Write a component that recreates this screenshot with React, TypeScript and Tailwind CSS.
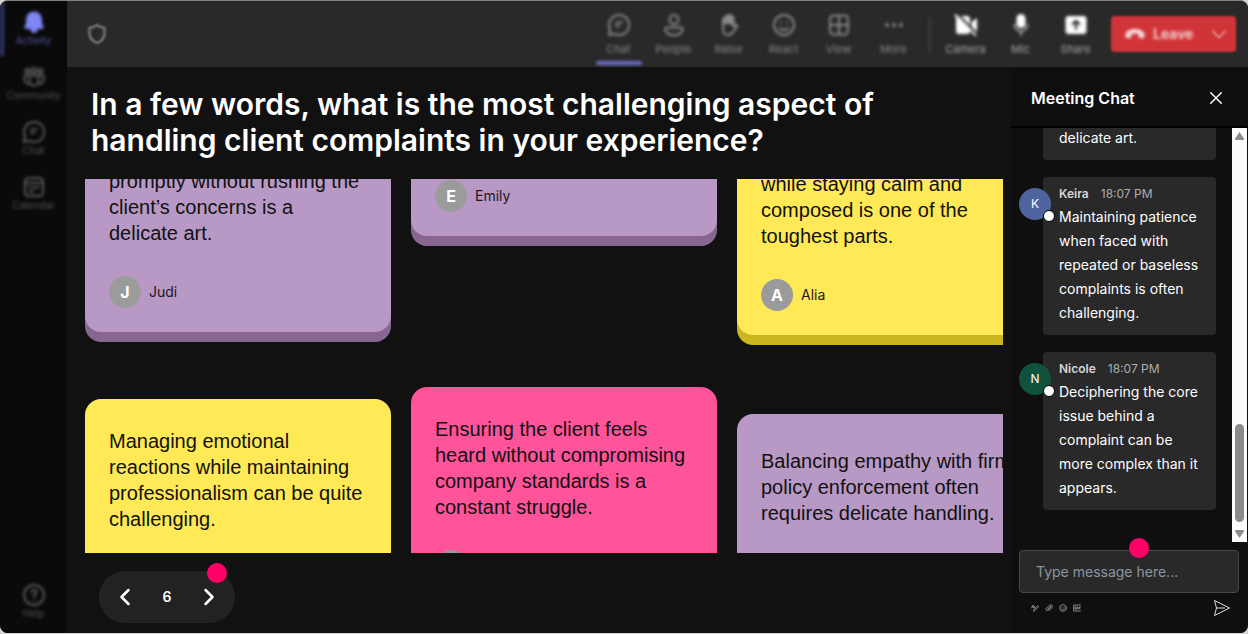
import type { ReactNode } from "react";

type IconProps = { children: ReactNode; className?: string };

function Icon({ children, className = "size-6" }: IconProps) {
  return (
    <svg
      viewBox="0 0 24 24"
      className={className}
      fill="none"
      stroke="currentColor"
      strokeWidth="2"
      strokeLinecap="round"
      strokeLinejoin="round"
      aria-hidden="true"
    >
      {children}
    </svg>
  );
}

const bell = (
  <path
    fill="currentColor"
    d="M12 2.5a7 7 0 0 0-7 7v4l-1.6 3.4c-.3.6.1 1.1.7 1.1h15.800c.6 0 1-.5.7-1.100L19 13.500v-4a7 7 0 0 0-7-7ZM9.500 19.500a2.500 2.500 0 0 0 5 0Z"
  />
);
const chat = (
  <>
    <path d="M12 2a10 10 0 1 1-4.600 18.800L1.800 22l1.300-5.400A10 10 0 0 1 12 2Z" />
    <path d="M9 9.500h6M9 13h3" />
  </>
);
const community = (
  <>
    <circle cx="5.500" cy="6" r="2" />
    <circle cx="12" cy="5.500" r="2.500" />
    <circle cx="18.500" cy="6" r="2" />
    <path d="M7.500 10.500h9V16a4.500 4.500 0 0 1-9 0ZM7 10.500H2.500V15a4 4 0 0 0 5 3.500M17 10.500h4.500V15a4 4 0 0 1-5 3.500" />
  </>
);
const calendar = (
  <>
    <rect x="3" y="3" width="18" height="18" rx="3.500" />
    <path d="M3 8h18M7.500 12.500h2M11.500 12.500h5M7.500 16.500h4" />
  </>
);
const help = (
  <>
    <circle cx="12" cy="12" r="10" />
    <path d="M9.500 9.500a2.500 2.500 0 1 1 3.800 2.100c-.8.600-1.300 1-1.300 2.100M12 16.800v.1" />
  </>
);
const people = (
  <>
    <circle cx="12" cy="6.500" r="4.500" />
    <path d="M5 14.500h14c1 0 1.800.8 1.800 1.800 0 3.700-4 6-8.800 6s-8.800-2.300-8.800-6c0-1 .8-1.800 1.800-1.800Z" />
  </>
);
const hand = (
  <>
    <path fill="currentColor" d="M6 12V6.500a1.300 1.300 0 0 1 2.600 0V4a1.300 1.300 0 0 1 2.600 0V3a1.300 1.300 0 0 1 2.600 0v1.500a1.300 1.300 0 0 1 2.600 0V12l-3-2H8Z" />
    <path d="M6 11v4.500c0 4 2 6.500 5 6.500 3.500 0 4.500-2 6-4.500l3.500-4.800c-1.300-1.200-2.700-.8-4.100.8V8" />
  </>
);
const smile = (
  <>
    <circle cx="12" cy="12" r="10" />
    <path d="M8.800 9.500v.3M15.200 9.500v.3M7.800 15c2.200 2.600 6.200 2.600 8.400 0" />
  </>
);
const grid = (
  <>
    <rect x="3" y="2.500" width="18" height="19" rx="3.500" />
    <path d="M12 3v18M3 12h18" />
  </>
);
const more = (
  <>
    <circle cx="5" cy="12" r="1" fill="currentColor" />
    <circle cx="12" cy="12" r="1" fill="currentColor" />
    <circle cx="19" cy="12" r="1" fill="currentColor" />
  </>
);
const camera = (
  <>
    <path fill="currentColor" stroke="none" d="M4 3h9a3 3 0 0 1 3 3v12a3 3 0 0 1-3 3H5a3 3 0 0 1-3-3V3ZM17.500 9 23 5v14l-5.500-4Z" />
    <path d="m1.500 2 20 20" />
    <path stroke="#292929" d="m4 1.500 19 19" />
  </>
);
const mic = (
  <>
    <rect x="8.500" y="2" width="7" height="12" rx="3.500" fill="currentColor" />
    <path className="text-[#a0a0a0]" d="M5.500 11.500a6.500 6.500 0 0 0 13 0M12 18v4" />
  </>
);
const share = (
  <>
    <rect x="2.500" y="4" width="19" height="16" rx="2" fill="currentColor" />
    <path stroke="#292929" d="M12 16V8M8.500 11.300 12 7.800l3.500 3.500" />
  </>
);

const navItems = [
  { label: "Activity", icon: bell, active: true },
  { label: "Community", icon: community, active: false },
  { label: "Chat", icon: chat, active: false },
  { label: "Calendar", icon: calendar, active: false },
];

const meetingTools = [
  { label: "Chat", icon: chat, active: true },
  { label: "People", icon: people, active: false },
  { label: "Raise", icon: hand, active: false },
  { label: "React", icon: smile, active: false },
  { label: "View", icon: grid, active: false },
  { label: "More", icon: more, active: false },
];

const deviceTools = [
  { label: "Camera", icon: camera },
  { label: "Mic", icon: mic },
  { label: "Share", icon: share },
];

function NavButton({ label, icon, active }: { label: string; icon: ReactNode; active: boolean }) {
  return (
    <button
      type="button"
      className={`flex h-[55px] w-full flex-col items-center border-l-4 pr-1 pt-[9px] text-[10px] leading-3 ${
        active ? "border-[#34356b] text-[#5557a5]" : "border-transparent text-[#555]"
      }`}
    >
      <span className={active ? "text-[#7f85f5]" : "text-[#5a5a5a]"}>
        <Icon>{icon}</Icon>
      </span>
      {label}
    </button>
  );
}

function Sidebar() {
  return (
    <nav className="flex w-[67px] shrink-0 flex-col bg-[#0a0a0a]">
      <div className="blur-[1px]">
        <div className="blur-[1px]">
          {navItems.map((item) => (
            <NavButton key={item.label} {...item} />
          ))}
        </div>
      </div>
      <div className="mb-1 mt-auto blur-[1px]">
        <div className="blur-[1px]">
          <NavButton label="Help" icon={help} active={false} />
        </div>
      </div>
    </nav>
  );
}

function TopBar() {
  return (
    <header className="flex h-[66px] shrink-0 items-stretch bg-[#292929] pl-[18px] pr-3 text-[11px] leading-3 text-[#8a8a8a] shadow-sm">
      <div className="mr-auto flex items-center blur-[1px]">
        <Icon>
          <path d="M12 3c2 1.700 4.500 2.500 7.500 2.700V11c0 5-2.800 8.200-7.500 10-4.700-1.800-7.500-5-7.500-10V5.700C7.500 5.500 10 4.700 12 3Z" />
        </Icon>
      </div>
      <div className="flex blur-[1px]">
        <div className="flex blur-[1px]">
          {meetingTools.map((t) => (
            <button key={t.label} type="button" className="flex w-[55px] flex-col items-center pt-3">
              <Icon>{t.icon}</Icon>
              <span className="mt-1.5">{t.label}</span>
              {t.active && <span className="mt-1.5 h-1 w-[46px] rounded-full bg-[#6a6dca]" />}
            </button>
          ))}
          <span className="mx-2 mt-4 h-9 w-px bg-[#555]" />
          {deviceTools.map((t) => (
            <button key={t.label} type="button" className="flex w-[55px] flex-col items-center pt-3">
              <span className="text-white">
                <Icon>{t.icon}</Icon>
              </span>
              <span className="mt-1.5 text-[#a8a8a8]">{t.label}</span>
            </button>
          ))}
        </div>
        <div className="ml-2 mt-[15px] flex h-9 w-[125px] items-center rounded bg-[#d13438] text-[#f8dcdd]">
          <button type="button" className="flex flex-1 items-center gap-2 pl-3.5 text-sm font-semibold blur-[1px]">
            <svg viewBox="0 0 20 10" className="h-2.5 w-5" fill="currentColor" aria-hidden="true">
              <path d="M10 0C5.500 0 1.500 1.800.6 4.800.2 6.300.5 8 1.300 9c.3.400.8.500 1.300.400l2.800-.7c.7-.2 1.100-.8 1.100-1.500l.1-2.200c2.200-.8 4.600-.8 6.800 0l.1 2.200c0 .7.400 1.300 1.100 1.500l2.800.7c.5.100 1 0 1.300-.4.800-1 1.100-2.700.7-4.200C18.500 1.800 14.500 0 10 0Z" />
            </svg>
            Leave
          </button>
          <button type="button" aria-label="Leave options" className="px-2 text-[#ee9a9c]">
            <Icon className="size-[18px]">
              <path d="m4 8.500 8 8 8-8" />
            </Icon>
          </button>
        </div>
      </div>
    </header>
  );
}

const palette = {
  purple: "bg-[#b899c5] shadow-[0_10px_0_#876791]",
  yellow: "bg-[#ffe957] shadow-[0_10px_0_#cbb521]",
  pink: "bg-[#ff5499] shadow-[0_10px_0_#c93a74]",
};

type NoteProps = { tone: keyof typeof palette; text?: string; author?: string; roomy?: boolean };

function Note({ tone, text, author, roomy = false }: NoteProps) {
  return (
    <article className={`rounded-2xl px-6 pb-6 text-[#111] ${roomy ? "pt-[34px]" : "pt-[29px]"} ${palette[tone]}`}>
      {text && (
        <p className="mb-[30px] font-['Liberation_Sans',Arial,sans-serif] text-[20px] leading-[26px]">{text}</p>
      )}
      <div className="flex items-center gap-2">
        <span className="flex size-8 items-center justify-center rounded-full bg-[#9b9b9b] text-base font-bold text-white">
          {author?.[0]}
        </span>
        <span className="text-sm text-[#1d1722]">{author}</span>
      </div>
    </article>
  );
}

function Board() {
  return (
    <div className="ml-[18px] mr-2 mt-[21px] flex min-h-0 flex-1 items-start gap-5 overflow-hidden">
      <div className="-mt-10 flex w-[306px] shrink-0 flex-col gap-[67px]">
        <Note tone="purple" text="promptly without rushing the client’s concerns is a delicate art." author="Judi" />
        <Note tone="yellow" text="Managing emotional reactions while maintaining professionalism can be quite challenging." />
      </div>
      <div className="-mt-7 flex w-[306px] shrink-0 flex-col gap-[151px]">
        <Note tone="purple" author="Emily" />
        <Note tone="pink" text="Ensuring the client feels heard without compromising company standards is a constant struggle." />
      </div>
      <div className="-mt-[37px] flex w-[306px] shrink-0 flex-col gap-[79px]">
        <Note tone="yellow" text="while staying calm and composed is one of the toughest parts." author="Alia" />
        <Note tone="purple" text="Balancing empathy with firm policy enforcement often requires delicate handling." roomy />
      </div>
    </div>
  );
}

function Pager() {
  return (
    <div className="relative mb-2.5 ml-8 mt-[18px] flex h-[52px] w-[136px] shrink-0 items-center justify-between rounded-full bg-[#222] px-3.5 text-white">
      <button type="button" aria-label="Previous page">
        <Icon className="size-6">
          <path strokeWidth="2.500" d="m15.500 5-7 7 7 7" />
        </Icon>
      </button>
      <span className="text-sm font-semibold">6</span>
      <button type="button" aria-label="Next page">
        <Icon className="size-6">
          <path strokeWidth="2.500" d="m8.500 5 7 7-7 7" />
        </Icon>
      </button>
      <span className="absolute -top-2 right-2 size-5 rounded-full bg-[#ff0066]" />
    </div>
  );
}

type MessageProps = { name?: string; time?: string; text: string; color?: string };

function Message({ name, time, text, color }: MessageProps) {
  return (
    <div className="flex shrink-0 items-start">
      <div className="relative z-10 mt-[11px] w-8 shrink-0">
        {name && (
          <>
            <span className={`flex size-8 items-center justify-center rounded-full text-xs text-white ${color}`}>
              {name[0]}
            </span>
            <span className="absolute -bottom-0.5 -right-1 size-3 rounded-full border border-black bg-white" />
          </>
        )}
      </div>
      <div className="-ml-2 flex-1 rounded bg-[#292929] px-4 pb-2.5 pt-1.5">
        {name && (
          <div className="flex gap-3 text-xs leading-[22px]">
            <span className="font-semibold text-[#d6d6d6]">{name}</span>
            <time className="text-[#adadad]">{time}</time>
          </div>
        )}
        <p className="text-sm leading-6 text-white">{text}</p>
      </div>
    </div>
  );
}

function ChatPanel() {
  return (
    <aside className="flex w-[237px] shrink-0 flex-col bg-[#0f0f0f] pr-px">
      <div className="flex h-[61px] shrink-0 items-center justify-between border-b-2 border-black pl-5 pr-[22px] pt-0.5 text-white">
        <h2 className="text-base font-semibold">Meeting Chat</h2>
        <button type="button" aria-label="Close chat">
          <Icon className="size-[18px]">
            <path d="m5 5 14 14M19 5 5 19" />
          </Icon>
        </button>
      </div>
      <div className="flex min-h-0 flex-1">
        <div className="flex min-w-0 flex-1 flex-col justify-end gap-[17px] overflow-hidden pb-8 pl-2 pr-4">
          <Message text="delicate art." />
          <Message
            name="Keira"
            time="18:07 PM"
            color="bg-[#4f649f]"
            text="Maintaining patience when faced with repeated or baseless complaints is often challenging."
          />
          <Message
            name="Nicole"
            time="18:07 PM"
            color="bg-[#11523f]"
            text="Deciphering the core issue behind a complaint can be more complex than it appears."
          />
        </div>
        <div className="flex w-[15px] shrink-0 flex-col items-center justify-between bg-[#fcfcfc] py-1 text-[#8b8b8b]">
          <svg viewBox="0 0 9 8" className="h-2 w-[9px]" fill="currentColor" aria-hidden="true">
            <path d="M4.500 0 9 6.500Q9 8 8 8H1Q0 8 0 6.500Z" />
          </svg>
          <span className="mb-2 mt-auto h-[98px] w-[9px] rounded-full bg-[#8b8b8b]" />
          <svg viewBox="0 0 9 8" className="h-2 w-[9px]" fill="currentColor" aria-hidden="true">
            <path d="M4.500 8 9 1.500Q9 0 8 0H1Q0 0 0 1.500Z" />
          </svg>
        </div>
      </div>
      <form className="shrink-0 px-2 pb-4 pt-2" onSubmit={(e) => e.preventDefault()}>
        <div className="relative">
          <input
            type="text"
            aria-label="Message"
            placeholder="Type message here..."
            className="block h-[43px] w-full rounded border border-[#484848] bg-[#292929] px-4 text-sm text-white outline-none placeholder:text-[#8b95a3]"
          />
          <span className="absolute -top-3 left-1/2 size-5 rounded-full bg-[#ff0066]" />
        </div>
        <div className="mt-1.5 flex items-center gap-1.5 pl-3 pr-2 text-[#a0a0a0]">
          <button type="button" aria-label="Format">
            <Icon className="size-2">
              <path strokeWidth="2.500" d="m2 12 5-9 4 10M3 9h7M8 21l2-6L20 5l3 3-10 10Z" />
            </Icon>
          </button>
          <button type="button" aria-label="Attach">
            <Icon className="size-2">
              <path strokeWidth="2.500" d="m8 15 8-8c2-2 4 0 2 2l-9 9c-4 4-8-1-5-5l9-9c5-5 12 2 8 7l-9 9" />
            </Icon>
          </button>
          <button type="button" aria-label="Emoji">
            <Icon className="size-2">
              <g strokeWidth="2.500">{smile}</g>
            </Icon>
          </button>
          <button type="button" aria-label="GIF">
            <Icon className="size-2">
              <path strokeWidth="2.500" d="M22 3H2v18h20M10 9H6v6h4v-3M14 9v6M18 15V9h4M18 12h3" />
            </Icon>
          </button>
          <button type="submit" aria-label="Send" className="ml-auto text-[#dedede]">
            <svg viewBox="0 0 18 18" className="size-[18px]" fill="none" stroke="currentColor" strokeLinejoin="round" aria-hidden="true">
              <path d="M1.500 1.500 16.500 9l-15 7.500L3.500 9ZM3.500 9H12" />
            </svg>
          </button>
        </div>
      </form>
    </aside>
  );
}

export default function App() {
  return (
    <div className="h-screen bg-[#d4d4d4] pb-px font-['Inter','Liberation_Sans',sans-serif]">
      <div className="flex h-full overflow-hidden rounded-lg border-t border-[#808080] bg-[#111]">
        <Sidebar />
        <div className="flex min-w-0 flex-1 flex-col">
          <TopBar />
          <div className="flex min-h-0 flex-1">
            <main className="flex min-w-0 flex-1 flex-col bg-[#111]">
              <h1 className="ml-6 mr-20 mt-[19px] text-3xl font-semibold text-white">
                In a few words, what is the most challenging aspect of handling client complaints in your experience?
              </h1>
              <Board />
              <Pager />
            </main>
            <ChatPanel />
          </div>
        </div>
      </div>
    </div>
  );
}
